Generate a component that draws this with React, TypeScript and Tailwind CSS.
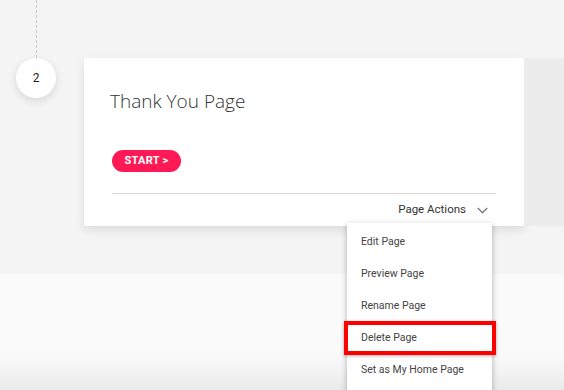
import React from 'react'

const actions = ['Edit Page', 'Preview Page', 'Rename Page', 'Delete Page', 'Set as My Home Page']

export default function App() {
  return (
    <div className="relative w-[564px] h-[390px] overflow-hidden bg-[#fafafa] font-['Roboto',sans-serif]">
      {/* top band with the step and its card */}
      <div className="h-[274px] bg-[#f4f4f4] flex">
        <div className="w-[72px] mr-[12px] flex flex-col items-center">
          <div className="h-[58px] border-l border-dashed border-[#c8c8c8]" />
          <div className="w-10 h-10 rounded-full bg-white shadow-[0_3px_8px_rgba(0,0,0,0.12)] flex items-center justify-center text-[12px] text-[#222]">
            2
          </div>
        </div>
        <div className="flex-1 pt-[58px] flex">
          <div className="w-[440px] h-[168px] bg-white rounded-[2px] shadow-[0_4px_10px_rgba(0,0,0,0.1)] pl-7 pr-7 flex flex-col">
            <h2 className="mt-[31px] ml-[-2px] text-[19px] leading-[24px] font-light text-[#333] font-['Open_Sans',sans-serif]">
              Thank You Page
            </h2>
            <button className="mt-[37px] w-[69px] h-[22px] rounded-full bg-[#ff1a55] text-white text-[11px] font-bold tracking-[0.3px]">
              START &gt;
            </button>
            <div className="mt-[21px] border-t border-[#d9d9d9]" />
            <div className="flex items-center justify-end h-[32px] pr-[8px] gap-[11px] text-[11.5px] text-[#333]">
              <span>Page Actions</span>
              <svg width="11" height="7" viewBox="0 0 11 7" fill="none" stroke="#777" strokeWidth="1.3">
                <path d="M0.8 1 L5.5 5.8 L10.2 1" />
              </svg>
            </div>
          </div>
          <div className="flex-1 h-[168px] bg-[#ececec]" />
        </div>
      </div>
      <div className="absolute left-0 right-0 bottom-0 h-[34px] bg-gradient-to-b from-[#fafafa] to-[#eaeaea]" />

      {/* open dropdown */}
      <div className="absolute left-[347px] top-[223px] w-[145px] h-[180px] bg-white shadow-[0_2px_6px_rgba(0,0,0,0.3)] pt-[3px]">
        {actions.map((a) => (
          <div key={a} className="h-8 flex items-center pl-[14px] text-[10.5px] text-[#444]">
            {a}
          </div>
        ))}
      </div>
      <div className="absolute left-[344px] top-[321px] w-[152px] h-[34px] border-[4px] border-[#ff0000] shadow-[0_1px_3px_rgba(0,0,0,0.3)]" />
    </div>
  )
}
